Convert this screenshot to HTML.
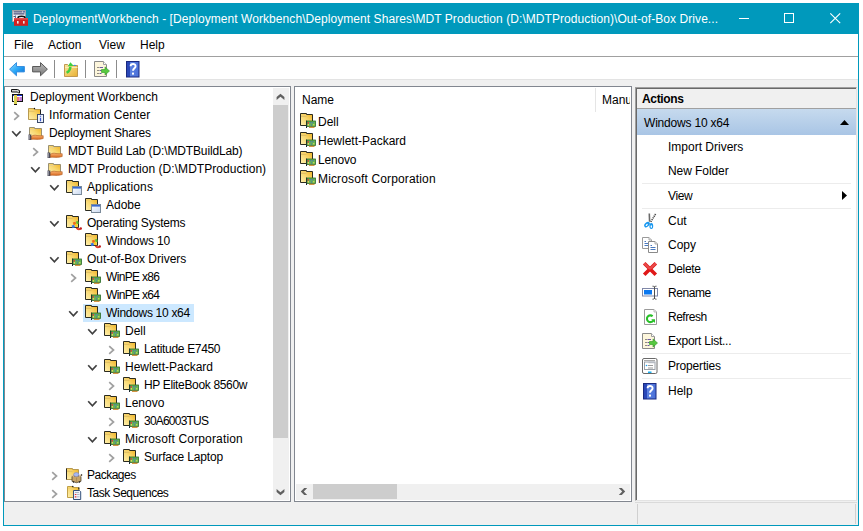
<!DOCTYPE html><html><head><meta charset="utf-8"><style>
*{margin:0;padding:0;box-sizing:border-box}
html,body{width:863px;height:531px;overflow:hidden;background:#fff;font-family:"Liberation Sans", sans-serif;font-size:12px;color:#000}
.a{position:absolute}
.t{position:absolute;white-space:nowrap;line-height:14px;height:14px}
svg{position:absolute;overflow:visible}
</style></head><body>
<svg width="0" height="0" style="position:absolute;left:0;top:0"><defs>
<linearGradient id="fy" x1="0" y1="1" x2="1" y2="0"><stop offset="0" stop-color="#fff0b0"/><stop offset="0.5" stop-color="#f8d870"/><stop offset="1" stop-color="#f0b020"/></linearGradient>
<linearGradient id="fy2" x1="0" y1="0" x2="1" y2="1"><stop offset="0" stop-color="#fbe7a0"/><stop offset="1" stop-color="#e8b030"/></linearGradient>
<linearGradient id="hand" x1="0" y1="0" x2="0" y2="1"><stop offset="0" stop-color="#f8b070"/><stop offset="1" stop-color="#d86a20"/></linearGradient>
<linearGradient id="win" x1="0" y1="0" x2="1" y2="1"><stop offset="0" stop-color="#ffffff"/><stop offset="1" stop-color="#c8d8f0"/></linearGradient>
<linearGradient id="helpg" x1="0" y1="0" x2="1" y2="0"><stop offset="0" stop-color="#2a48b8"/><stop offset="0.3" stop-color="#2a48b8"/><stop offset="0.31" stop-color="#5a80e0"/><stop offset="1" stop-color="#4a70d8"/></linearGradient>
<symbol id="foldg" overflow="visible"><path d="M0.5 12.5V1.5h6v1h6v10z" fill="url(#fy)" stroke="#b89a50"/><path d="M1 3.5h5.5" stroke="#f2d070"/><path d="M1 4.5h5.5" stroke="#d8b860" stroke-opacity="0.6"/></symbol>
<symbol id="fold" overflow="visible"><path d="M0.5 12.5V0.5h6v1h6v11z" fill="url(#fy)" stroke="#2b2b20"/><path d="M1 2.5h5.5" stroke="#f2d070"/><path d="M1 3.5h5.5" stroke="#d8b860" stroke-opacity="0.7"/></symbol>
<symbol id="drv" overflow="visible"><use href="#fold"/><path d="M6.5 7.5v7.5" stroke="#1a2030"/><rect x="7" y="8" width="8.5" height="5.5" fill="#68b850" stroke="#2c6a2a" stroke-width="0.8"/><rect x="7.6" y="9" width="1.4" height="1.6" fill="#e04040"/><rect x="7.6" y="11" width="1.4" height="1.6" fill="#e8d060"/><circle cx="10.8" cy="9.8" r="0.7" fill="#4a70b0"/><circle cx="12.8" cy="9.8" r="0.7" fill="#4a70b0"/><circle cx="11.5" cy="12" r="0.7" fill="#4a70b0"/><circle cx="13.8" cy="11.8" r="0.7" fill="#d8e060"/><path d="M9 14.3h5.5" stroke="#d08a30" stroke-width="1.2"/></symbol>
<symbol id="share" overflow="visible"><path d="M1.5 12.5V2.5h5v1h7v9z" fill="url(#fy)" stroke="#9a9070"/><path d="M2 4.5h5" stroke="#e8d090"/><path d="M3 11.5c2-1.5 4-1.5 6-1c2 0.5 4 0 6.2 0.2v2.8c-3 1-6 1-9.5 0.8h-2.7z" fill="url(#hand)" stroke="#b05a20" stroke-width="0.6"/><rect x="0.5" y="9.5" width="2.8" height="5.5" fill="#4a4a58"/><path d="M1.2 10v4.5" stroke="#c8c8d0" stroke-width="0.8"/></symbol>
<symbol id="app" overflow="visible"><path d="M0.5 13.5V1.5h6v1h6v11z" fill="url(#fy)" stroke="#2b2b20"/><path d="M1 3.5h5.5" stroke="#f2d070"/><rect x="6.5" y="7.5" width="9" height="8" fill="url(#win)" stroke="#7a8a9a"/><rect x="7" y="8" width="8" height="1.6" fill="#3a6ad0"/></symbol>
<symbol id="os" overflow="visible"><use href="#fold"/><path d="M6.8 7.6l2.6-0.9l0.9 2.6l-2.6 0.9z" fill="#f06a18"/><path d="M9.8 6.6l2.2-0.6l0.9 2.6l-2.2 0.6z" fill="#60c030"/><path d="M5.6 10.6l2.6-0.9l0.9 2.6l-2.6 0.9z" fill="#3a78e8"/><path d="M8.6 9.6l2.2-0.6l0.9 2.6l-2.2 0.6z" fill="#f8d020"/><path d="M10.5 12.8c1 1.5 2.8 1.8 4.3 0.8" stroke="#e04030" stroke-width="1.8" fill="none"/><circle cx="14.8" cy="13.4" r="1.2" fill="#c02020"/></symbol>
<symbol id="pkg" overflow="visible"><use href="#foldg"/><path d="M0.5 1.5v11" stroke="#222"/><path d="M6 9.5l4.5-1.2l4.5 1.2v4.8l-4.5 1.4l-4.5-1.4z" fill="#c8a468" stroke="#3a3020" stroke-width="0.7"/><path d="M10.5 10.7v5" stroke="#9a7a48" stroke-width="0.6"/><path d="M5.3 8l2.5 1.5M15.8 8l-2.5 1.5" stroke="#e8c898" stroke-width="1.2"/><ellipse cx="10.3" cy="7.6" rx="2.7" ry="2" fill="#a8b8f0" stroke="#6a7ac0" stroke-width="0.5"/><circle cx="15.5" cy="8" r="0.8" fill="#111"/><circle cx="7.5" cy="15" r="0.7" fill="#111"/><circle cx="13.5" cy="15" r="0.7" fill="#111"/></symbol>
<symbol id="ts" overflow="visible"><path d="M1.5 12.5V1.5h5.5v1h6v10z" fill="url(#fy)" stroke="#c0a048"/><path d="M2 3.5h5" stroke="#f2d070"/><circle cx="6.8" cy="1.5" r="0.7" fill="#111"/><path d="M12.8 2.5v2" stroke="#111"/><path d="M7.5 5.5h6l1.2 1.2v7.8h-7.2z" fill="#eef2fb" stroke="#34507a"/><path d="M8.8 9.5h1.6M8.8 11.8h1.6" stroke="#e83030" stroke-width="1.2"/><path d="M9 7.5h4M11 9.5h2.5M11 11.8h2.5" stroke="#a0a8b8" stroke-width="0.8"/></symbol>
<symbol id="info" overflow="visible"><use href="#foldg"/><circle cx="6.5" cy="1.5" r="0.7" fill="#111"/><path d="M12.5 2.5v7" stroke="#222"/><rect x="9.5" y="7.5" width="6" height="8" fill="#eef2fb" stroke="#3a4a6a"/><path d="M12.5 8.8v1M12.5 10.8v3.5" stroke="#3a58d0" stroke-width="1.2"/></symbol>
<symbol id="root" overflow="visible"><rect x="2.5" y="5.5" width="10" height="7" fill="#fff" stroke="#111"/><rect x="3" y="6" width="9" height="1" fill="#1a30e0"/><rect x="7" y="8" width="2.5" height="4" fill="#f07080"/><rect x="9.5" y="8" width="2.5" height="4" fill="#c080d8"/><rect x="4" y="6" width="3" height="9" fill="#d8d050"/><rect x="4" y="15" width="3" height="1" fill="#111"/><path d="M1.5 0.5h6l2 1v2.5h-1l-1-1h-6z" fill="#d0d0d0" stroke="#111"/></symbol>
<symbol id="page" overflow="visible"><path d="M0.5 0.5h7.5l3 3v12h-10.5z" fill="#fff" stroke="#8a8a8a"/><path d="M8 0.5v3h3" fill="#e8e8e8" stroke="#9a9a9a"/></symbol>
<symbol id="help" overflow="visible"><rect x="1.5" y="0.5" width="12.5" height="15.5" fill="url(#helpg)" stroke="#1a2a80"/><path d="M5.6 5.2c0-3 5-3 5 0c0 2-2.6 2.2-2.6 4.6" stroke="#fff" stroke-width="1.9" fill="none"/><rect x="7" y="11.6" width="2" height="2" fill="#fff"/></symbol>
<symbol id="export" overflow="visible"><path d="M0.5 0.5h9l3 3v12h-12z" fill="#fdf6dc" stroke="#8a8a88"/><path d="M9.5 0.5v3h3" fill="#fff" stroke="#a0a0a0"/><path d="M3.5 6.5h1M3.5 9.5h1M3.5 12.5h1" stroke="#222"/><path d="M5.5 6.5h3.5M5.5 9.5h2M5.5 12.5h2" stroke="#6a5aa0"/><path d="M7.5 8.5h3.5v-2.6l4.5 4.1l-4.5 4.1v-2.6h-3.5z" fill="#58c840" stroke="#2c9a20" stroke-width="0.6"/></symbol>
</defs></svg>
<div class="a" style="left:3px;top:3px;width:856px;height:523px;background:#f0f0f0;border:1px solid #0099bc"></div>
<div class="a" style="left:3px;top:3px;width:856px;height:31px;background:#0099bc"></div>
<svg style="left:12px;top:10px" width="16" height="16"><rect x="0.5" y="0.5" width="13" height="11" fill="#f2f2f6" stroke="#b0a0a0" stroke-width="0.8"/><path d="M1.5 1.8h9M1.5 3.8h11" stroke="#48507a" stroke-width="1.2"/><path d="M11 1.8h2" stroke="#3a4a8a" stroke-width="1.2"/><path d="M1.5 6.5h2" stroke="#556" /><path d="M3.5 5.5v3" stroke="#5570a0"/><path d="M6 8c0-2.2 7-2.2 7 0" stroke="#111" stroke-width="1.5" fill="none"/><path d="M2 8.2h14v7.6h-14z" fill="#d42020"/><path d="M2 8.2h14v1.4h-14z" fill="#e85050"/><rect x="5" y="11" width="1.6" height="2.6" fill="#dfe8e8"/><rect x="11" y="11" width="1.6" height="2.6" fill="#dfe8e8"/></svg>
<div class="t" style="left:33px;top:12px;color:#fff;letter-spacing:0.065px">DeploymentWorkbench - [Deployment Workbench\Deployment Shares\MDT Production (D:\MDTProduction)\Out-of-Box Drive...</div>
<div class="a" style="left:739px;top:18px;width:10px;height:1px;background:#fff"></div>
<div class="a" style="left:784px;top:13px;width:10px;height:10px;border:1px solid #fff"></div>
<svg style="left:830px;top:13px" width="11" height="11"><path d="M0.3 0.3L10.2 10.2M10.2 0.3L0.3 10.2" stroke="#fff" stroke-width="1.1"/></svg>
<div class="a" style="left:4px;top:34px;width:854px;height:22px;background:#fff"></div>
<div class="a" style="left:4px;top:56px;width:854px;height:1px;background:#a0a0a0"></div>
<div class="t" style="left:14px;top:38px">File</div>
<div class="t" style="left:48px;top:38px">Action</div>
<div class="t" style="left:99px;top:38px">View</div>
<div class="t" style="left:140px;top:38px">Help</div>
<div class="a" style="left:4px;top:57px;width:854px;height:22px;background:#fff"></div>
<div class="a" style="left:4px;top:79px;width:854px;height:1px;background:#e3e3e3"></div>
<svg style="left:9px;top:62px" width="16" height="15"><defs><linearGradient id="ab" x1="0" y1="0" x2="1" y2="1"><stop offset="0" stop-color="#90dcff"/><stop offset="0.5" stop-color="#2aa8f8"/><stop offset="1" stop-color="#0a6ad0"/></linearGradient></defs><path d="M0.6 7.2L7.5 0.6v3.9h7.9v5.4h-7.9v3.9z" fill="url(#ab)" stroke="#3a90e0" stroke-width="1"/></svg>
<svg style="left:32px;top:62px" width="16" height="15"><defs><linearGradient id="ag" x1="0" y1="0" x2="0" y2="1"><stop offset="0" stop-color="#b8b8b8"/><stop offset="1" stop-color="#7a7a7a"/></linearGradient></defs><path d="M15.4 7.2L8.5 0.6v3.9h-7.9v5.4h7.9v3.9z" fill="url(#ag)" stroke="#5a5a5a" stroke-width="1"/></svg>
<div class="a" style="left:54px;top:60px;width:1px;height:18px;background:#8c8c8c"></div>
<div class="a" style="left:85px;top:60px;width:1px;height:18px;background:#8c8c8c"></div>
<div class="a" style="left:116px;top:60px;width:1px;height:18px;background:#8c8c8c"></div>
<svg style="left:63px;top:61px" width="16" height="16"><path d="M1.5 15.5V3.5h3l1 1h9v11z" fill="url(#fy2)" stroke="#c09850"/><path d="M2 6.5h12.5" stroke="#fbeab8"/><ellipse cx="11.8" cy="4.4" rx="1.2" ry="0.6" fill="#3a8ae8"/><path d="M3.6 11.8c2.2-1.2 3.6-3 3.8-6" stroke="#40d040" stroke-width="2.4" fill="none"/><path d="M4.8 5.2l2.6-4l3.2 3.6l-2.4 0.4z" fill="#40d040"/></svg>
<svg style="left:94px;top:61px" width="16" height="16"><use href="#export"/></svg>
<svg style="left:125px;top:61px" width="16" height="17"><use href="#help"/></svg>
<div class="a" style="left:4px;top:86px;width:287px;height:416px;background:#fff;border:1px solid #828790"></div>
<div class="a" style="left:83px;top:304px;width:111px;height:18px;background:#cce8ff"></div>
<svg style="left:10px;top:89px" width="16" height="16"><use href="#root"/></svg>
<div class="t" style="left:30px;top:90px;letter-spacing:0.000px">Deployment Workbench</div>
<svg style="left:28px;top:107px" width="16" height="16"><use href="#info"/></svg>
<svg style="left:13px;top:111px" width="8" height="10"><path d="M1.2 1.2L5.5 5L1.2 8.8" stroke="#a0a0a0" stroke-width="1.7" fill="none"/></svg>
<div class="t" style="left:49px;top:108px;letter-spacing:0.112px">Information Center</div>
<svg style="left:28px;top:125px" width="16" height="16"><use href="#share"/></svg>
<svg style="left:11px;top:130px" width="11" height="8"><path d="M1.2 1.2L5.4 5.8L9.6 1.2" stroke="#404040" stroke-width="1.7" fill="none"/></svg>
<div class="t" style="left:49px;top:126px;letter-spacing:-0.219px">Deployment Shares</div>
<svg style="left:47px;top:143px" width="16" height="16"><use href="#share"/></svg>
<svg style="left:32px;top:147px" width="8" height="10"><path d="M1.2 1.2L5.5 5L1.2 8.8" stroke="#a0a0a0" stroke-width="1.7" fill="none"/></svg>
<div class="t" style="left:68px;top:144px;letter-spacing:-0.134px">MDT Build Lab (D:\MDTBuildLab)</div>
<svg style="left:47px;top:161px" width="16" height="16"><use href="#share"/></svg>
<svg style="left:30px;top:166px" width="11" height="8"><path d="M1.2 1.2L5.4 5.8L9.6 1.2" stroke="#404040" stroke-width="1.7" fill="none"/></svg>
<div class="t" style="left:68px;top:162px;letter-spacing:0.050px">MDT Production (D:\MDTProduction)</div>
<svg style="left:66px;top:179px" width="16" height="16"><use href="#app"/></svg>
<svg style="left:49px;top:184px" width="11" height="8"><path d="M1.2 1.2L5.4 5.8L9.6 1.2" stroke="#404040" stroke-width="1.7" fill="none"/></svg>
<div class="t" style="left:87px;top:180px;letter-spacing:0.109px">Applications</div>
<svg style="left:85px;top:197px" width="16" height="16"><use href="#app"/></svg>
<div class="t" style="left:106px;top:198px;letter-spacing:0.000px">Adobe</div>
<svg style="left:66px;top:215px" width="16" height="16"><use href="#os"/></svg>
<svg style="left:49px;top:220px" width="11" height="8"><path d="M1.2 1.2L5.4 5.8L9.6 1.2" stroke="#404040" stroke-width="1.7" fill="none"/></svg>
<div class="t" style="left:87px;top:216px;letter-spacing:-0.219px">Operating Systems</div>
<svg style="left:85px;top:233px" width="16" height="16"><use href="#os"/></svg>
<div class="t" style="left:106px;top:234px;letter-spacing:-0.122px">Windows 10</div>
<svg style="left:66px;top:251px" width="16" height="16"><use href="#drv"/></svg>
<svg style="left:49px;top:256px" width="11" height="8"><path d="M1.2 1.2L5.4 5.8L9.6 1.2" stroke="#404040" stroke-width="1.7" fill="none"/></svg>
<div class="t" style="left:87px;top:252px;letter-spacing:0.000px">Out-of-Box Drivers</div>
<svg style="left:85px;top:269px" width="16" height="16"><use href="#drv"/></svg>
<svg style="left:70px;top:273px" width="8" height="10"><path d="M1.2 1.2L5.5 5L1.2 8.8" stroke="#a0a0a0" stroke-width="1.7" fill="none"/></svg>
<div class="t" style="left:106px;top:270px;letter-spacing:-0.675px">WinPE x86</div>
<svg style="left:85px;top:287px" width="16" height="16"><use href="#drv"/></svg>
<div class="t" style="left:106px;top:288px;letter-spacing:-0.675px">WinPE x64</div>
<svg style="left:85px;top:305px" width="16" height="16"><use href="#drv"/></svg>
<svg style="left:68px;top:310px" width="11" height="8"><path d="M1.2 1.2L5.4 5.8L9.6 1.2" stroke="#404040" stroke-width="1.7" fill="none"/></svg>
<div class="t" style="left:106px;top:306px;letter-spacing:-0.300px">Windows 10 x64</div>
<svg style="left:104px;top:323px" width="16" height="16"><use href="#drv"/></svg>
<svg style="left:87px;top:328px" width="11" height="8"><path d="M1.2 1.2L5.4 5.8L9.6 1.2" stroke="#404040" stroke-width="1.7" fill="none"/></svg>
<div class="t" style="left:125px;top:324px;letter-spacing:0.000px">Dell</div>
<svg style="left:123px;top:341px" width="16" height="16"><use href="#drv"/></svg>
<svg style="left:108px;top:345px" width="8" height="10"><path d="M1.2 1.2L5.5 5L1.2 8.8" stroke="#a0a0a0" stroke-width="1.7" fill="none"/></svg>
<div class="t" style="left:144px;top:342px;letter-spacing:-0.323px">Latitude E7450</div>
<svg style="left:104px;top:359px" width="16" height="16"><use href="#drv"/></svg>
<svg style="left:87px;top:364px" width="11" height="8"><path d="M1.2 1.2L5.4 5.8L9.6 1.2" stroke="#404040" stroke-width="1.7" fill="none"/></svg>
<div class="t" style="left:125px;top:360px;letter-spacing:0.000px">Hewlett-Packard</div>
<svg style="left:123px;top:377px" width="16" height="16"><use href="#drv"/></svg>
<svg style="left:108px;top:381px" width="8" height="10"><path d="M1.2 1.2L5.5 5L1.2 8.8" stroke="#a0a0a0" stroke-width="1.7" fill="none"/></svg>
<div class="t" style="left:144px;top:378px;letter-spacing:-0.341px">HP EliteBook 8560w</div>
<svg style="left:104px;top:395px" width="16" height="16"><use href="#drv"/></svg>
<svg style="left:87px;top:400px" width="11" height="8"><path d="M1.2 1.2L5.4 5.8L9.6 1.2" stroke="#404040" stroke-width="1.7" fill="none"/></svg>
<div class="t" style="left:125px;top:396px;letter-spacing:0.000px">Lenovo</div>
<svg style="left:123px;top:413px" width="16" height="16"><use href="#drv"/></svg>
<svg style="left:108px;top:417px" width="8" height="10"><path d="M1.2 1.2L5.5 5L1.2 8.8" stroke="#a0a0a0" stroke-width="1.7" fill="none"/></svg>
<div class="t" style="left:144px;top:414px;letter-spacing:-0.789px">30A6003TUS</div>
<svg style="left:104px;top:431px" width="16" height="16"><use href="#drv"/></svg>
<svg style="left:87px;top:436px" width="11" height="8"><path d="M1.2 1.2L5.4 5.8L9.6 1.2" stroke="#404040" stroke-width="1.7" fill="none"/></svg>
<div class="t" style="left:125px;top:432px;letter-spacing:0.150px">Microsoft Corporation</div>
<svg style="left:123px;top:449px" width="16" height="16"><use href="#drv"/></svg>
<svg style="left:108px;top:453px" width="8" height="10"><path d="M1.2 1.2L5.5 5L1.2 8.8" stroke="#a0a0a0" stroke-width="1.7" fill="none"/></svg>
<div class="t" style="left:144px;top:450px;letter-spacing:-0.177px">Surface Laptop</div>
<svg style="left:66px;top:467px" width="16" height="16"><use href="#pkg"/></svg>
<svg style="left:51px;top:471px" width="8" height="10"><path d="M1.2 1.2L5.5 5L1.2 8.8" stroke="#a0a0a0" stroke-width="1.7" fill="none"/></svg>
<div class="t" style="left:87px;top:468px;letter-spacing:-0.500px">Packages</div>
<svg style="left:66px;top:485px" width="16" height="16"><use href="#ts"/></svg>
<svg style="left:51px;top:489px" width="8" height="10"><path d="M1.2 1.2L5.5 5L1.2 8.8" stroke="#a0a0a0" stroke-width="1.7" fill="none"/></svg>
<div class="t" style="left:87px;top:486px;letter-spacing:-0.477px">Task Sequences</div>
<div class="a" style="left:273px;top:88px;width:16px;height:412px;background:#f0f0f0"></div>
<div class="a" style="left:273px;top:105px;width:15px;height:333px;background:#cdcdcd"></div>
<svg style="left:0;top:0" width="1" height="1"><path d="M276.6 97L280.5 93.8L284.4 97V100L280.5 96.8L276.6 100z" fill="#606060"/><path d="M276.6 489L280.5 492.2L284.4 489V492L280.5 495.2L276.6 492z" fill="#606060"/></svg>
<div class="a" style="left:294px;top:86px;width:338px;height:416px;background:#fff;border:1px solid #828790"></div>
<div class="t" style="left:302px;top:93px">Name</div>
<div class="a" style="left:595px;top:88px;width:1px;height:24px;background:#e5e5e5"></div>
<div class="a" style="left:296px;top:88px;width:334px;height:24px;overflow:hidden"><div class="t" style="left:306px;top:5px">Manufacturer</div></div>
<svg style="left:300px;top:113px" width="16" height="16"><use href="#drv"/></svg>
<div class="t" style="left:318px;top:115px;letter-spacing:0.000px">Dell</div>
<svg style="left:300px;top:132px" width="16" height="16"><use href="#drv"/></svg>
<div class="t" style="left:318px;top:134px;letter-spacing:0.000px">Hewlett-Packard</div>
<svg style="left:300px;top:151px" width="16" height="16"><use href="#drv"/></svg>
<div class="t" style="left:318px;top:153px;letter-spacing:-0.180px">Lenovo</div>
<svg style="left:300px;top:170px" width="16" height="16"><use href="#drv"/></svg>
<div class="t" style="left:318px;top:172px;letter-spacing:0.145px">Microsoft Corporation</div>
<div class="a" style="left:296px;top:484px;width:334px;height:16px;background:#f0f0f0"></div>
<div class="a" style="left:313px;top:484px;width:84px;height:15px;background:#cdcdcd"></div>
<svg style="left:0;top:0" width="1" height="1"><path d="M304.2 488H307.2L303.8 491.5L307.2 495H304.2L300.8 491.5z" fill="#606060"/><path d="M621.8 488H618.8L622.2 491.5L618.8 495H621.8L625.2 491.5z" fill="#606060"/></svg>
<div class="a" style="left:635px;top:87px;width:222px;height:414px;background:#fff;border-top:1px solid #a0a0a0;border-left:1px solid #a0a0a0;border-right:1px solid #e3e3e3;border-bottom:1px solid #e3e3e3"></div>
<div class="a" style="left:636px;top:88px;width:220px;height:1px;background:#696969"></div>
<div class="a" style="left:636px;top:88px;width:1px;height:412px;background:#696969"></div>
<div class="a" style="left:637px;top:89px;width:219px;height:19px;background:#f0f0f0"></div>
<div class="a" style="left:637px;top:108px;width:219px;height:1px;background:#a0a0a0"></div>
<div class="t" style="left:642px;top:92px;font-weight:bold;letter-spacing:-0.35px">Actions</div>
<div class="a" style="left:637px;top:109px;width:219px;height:26px;background:linear-gradient(#c6daee,#a9c5e5)"></div>
<div class="t" style="left:644px;top:116px;letter-spacing:-0.2px">Windows 10 x64</div>
<svg style="left:840px;top:120px" width="9" height="5"><path d="M0 5L4.5 0L9 5z" fill="#000"/></svg>
<div class="t" style="left:668px;top:140px;letter-spacing:0.000px">Import Drivers</div>
<div class="t" style="left:668px;top:164px;letter-spacing:-0.078px">New Folder</div>
<div class="t" style="left:668px;top:189px;letter-spacing:-0.367px">View</div>
<div class="t" style="left:668px;top:214px;letter-spacing:0.000px">Cut</div>
<div class="t" style="left:668px;top:238px;letter-spacing:0.000px">Copy</div>
<div class="t" style="left:668px;top:262px;letter-spacing:-0.360px">Delete</div>
<div class="t" style="left:668px;top:286px;letter-spacing:-0.420px">Rename</div>
<div class="t" style="left:668px;top:310px;letter-spacing:-0.483px">Refresh</div>
<div class="t" style="left:668px;top:334px;letter-spacing:-0.246px">Export List...</div>
<div class="t" style="left:668px;top:359px;letter-spacing:-0.189px">Properties</div>
<div class="t" style="left:668px;top:384px;letter-spacing:0.000px">Help</div>
<div class="a" style="left:642px;top:183px;width:209px;height:1px;background:#ececec"></div>
<div class="a" style="left:642px;top:208px;width:209px;height:1px;background:#ececec"></div>
<div class="a" style="left:642px;top:353px;width:209px;height:1px;background:#ececec"></div>
<div class="a" style="left:642px;top:378px;width:209px;height:1px;background:#ececec"></div>
<svg style="left:842px;top:191px" width="6" height="9"><path d="M0 0L5 4.5L0 9z" fill="#000"/></svg>
<svg style="left:642px;top:213px" width="16" height="16"><path d="M7.3 0.5L7.6 8.8" stroke="#6a6a6a" stroke-width="1.6"/><path d="M13.6 1L8.8 8.8" stroke="#4a4a4a" stroke-width="1.6" stroke-dasharray="1.2 0.8"/><ellipse cx="5" cy="11.6" rx="2.1" ry="3.3" transform="rotate(45 5 11.6)" fill="#1a98f0"/><ellipse cx="9.3" cy="13" rx="1.9" ry="3" fill="#1a98f0"/><ellipse cx="4.7" cy="11.9" rx="0.7" ry="1.3" transform="rotate(45 4.7 11.9)" fill="#fff"/><ellipse cx="9.3" cy="13.6" rx="0.7" ry="1.3" fill="#fff"/></svg>
<svg style="left:642px;top:237px" width="16" height="16"><path d="M0.5 0.5h6.5l2.5 2.5v8.5h-9z" fill="#fff" stroke="#9a9a9a"/><path d="M7 0.5v2.5h2.5" fill="#e8e8e8" stroke="#aaa"/><path d="M2.5 4.5h1.5M2.5 6.5h4M2.5 8.5h4" stroke="#4a7ac0"/><path d="M6.5 4.5h6.5l2.5 2.5v8.5h-9z" fill="#fff" stroke="#8a8a8a"/><path d="M13 4.5v2.5h2.5" fill="#e8e8e8" stroke="#aaa"/><path d="M8.5 8.5h1.5M8.5 10.5h5M8.5 12.5h5" stroke="#4a7ac0"/></svg>
<svg style="left:642px;top:261px" width="16" height="16"><path d="M2.2 2.2L13.8 13.8M13.8 2.2L2.2 13.8" stroke="#e01818" stroke-width="3.6"/><path d="M2.2 2.2L8 8M13.8 2.2L8 8" stroke="#f07070" stroke-width="2" stroke-opacity="0.6"/></svg>
<svg style="left:642px;top:285px" width="16" height="16"><rect x="0.5" y="3.5" width="15" height="7.5" fill="#fff" stroke="#8088a8"/><rect x="2" y="5" width="8" height="4.5" fill="#0a78f0"/><path d="M12.5 1.5v12.5M10.5 1.2c1 0 2 0.3 2 1.2c0-0.9 1-1.2 2-1.2M10.5 14.2c1 0 2-0.3 2-1.2c0 0.9 1 1.2 2 1.2" stroke="#505050" stroke-width="1" fill="none"/></svg>
<svg style="left:642px;top:309px" width="16" height="16"><path d="M2.5 0.5h9.5l2.5 2.5v12.5h-12z" fill="#fff" stroke="#9a9a9a"/><path d="M12 0.5v2.5h2.5" fill="#eee" stroke="#bbb"/><path d="M10.6 7.2A3.4 3.4 0 1 0 11.2 11.6" stroke="#28c028" stroke-width="2.1" fill="none"/><path d="M9.2 10.2h3.8v3.8z" fill="#28c028"/></svg>
<svg style="left:642px;top:333px" width="16" height="16"><use href="#export"/></svg>
<svg style="left:642px;top:358px" width="16" height="16"><rect x="0.5" y="0.5" width="14.5" height="15" rx="1.5" fill="#fff" stroke="#6a6a6a"/><path d="M2 2.5h11" stroke="#aaa"/><rect x="2.5" y="4" width="10.5" height="7.5" fill="#fff" stroke="#9aa0a8"/><path d="M6.5 4.5h6" stroke="#b8bcc4" stroke-width="1.5"/><circle cx="4.5" cy="7.5" r="0.8" fill="#1aa0f0"/><path d="M6 7.5h5M6 10h5" stroke="#9a9a9a"/><rect x="6" y="13.5" width="3.5" height="1.5" fill="#1ab0f0"/></svg>
<svg style="left:642px;top:383px" width="16" height="17"><use href="#help"/></svg>
<div class="a" style="left:635px;top:502px;width:222px;height:1px;background:#dadada"></div>
<div class="a" style="left:637px;top:504px;width:1px;height:20px;background:#d0d0d0"></div>
<div class="a" style="left:855px;top:504px;width:1px;height:20px;background:#d0d0d0"></div>
</body></html>
